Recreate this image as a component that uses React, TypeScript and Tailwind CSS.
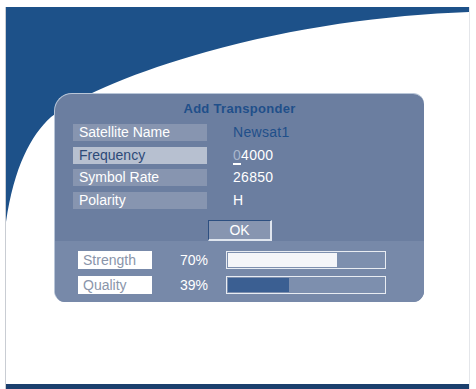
import React from "react";

const font = { fontFamily: '"Liberation Sans", Arial, sans-serif' };

function Row({ label, value, active, valueClass }: { label: string; value: React.ReactNode; active?: boolean; valueClass?: string }) {
  return (
    <div className="flex items-center h-[17px]">
      <div
        className={`w-[134px] h-[17px] flex items-center pl-[6px] text-[14px] ${
          active ? "bg-[#b7c0d0] text-[#2d4a78]" : "bg-[#8795b0] text-white"
        }`}
      >
        {label}
      </div>
      <div className={`ml-[26px] text-[14px] tracking-[0.3px] ${valueClass ?? "text-white"}`}>{value}</div>
    </div>
  );
}

function Meter({ label, pct, fillClass }: { label: string; pct: number; fillClass: string }) {
  return (
    <div className="flex items-center h-[18px]">
      <div className="w-[74px] h-[18px] bg-white text-[#8a95aa] text-[14px] flex items-center pl-[5px]">
        {label}
      </div>
      <div className="w-[74px] pl-[28px] text-white text-[14px]">{pct}%</div>
      <div className="w-[160px] h-[18px] border border-[#e8ecf2] bg-[#7d8fae] p-[1px]">
        <div className={`h-full ${fillClass}`} style={{ width: `${pct}%` }} />
      </div>
    </div>
  );
}

export default function App() {
  return (
    <div className="w-[476px] h-[389px] bg-white relative overflow-hidden" style={font}>
      <div className="absolute left-[5px] top-[7px] right-[6px] bottom-0 border-l border-[#c9cdd3] border-r border-r-[#e4e6ea] bg-white overflow-hidden">
        <svg className="absolute inset-0" width="465" height="382" viewBox="0 0 465 382">
          <path
            d="M0,0 H465 V5 C380,8 290,20 200,45 C130,65 80,85 45,110 C25,128 8,160 0,215 Z"
            fill="#1d5189"
          />
        </svg>
        <div className="absolute left-0 right-0 bottom-0 h-[5px] bg-[#1b3f6d]" />
      </div>

      <div className="relative pt-[93px] pl-[54px]">
        <div className="w-[370px] h-[209px] rounded-[11px] rounded-tl-[18px] bg-[#6b7ea0] border-t border-l border-[#b9c6d8] overflow-hidden flex flex-col">
          <div className="h-[126px] flex flex-col">
            <div className="h-[30px] flex items-center justify-center text-[#1f4f8a] text-[13px] tracking-[0.3px] font-bold">
              Add Transponder
            </div>
            <div className="flex flex-col gap-[5.5px] pl-[18px]">
              <Row label="Satellite Name" value="Newsat1" valueClass="text-[#1f4f8a]" />
              <Row
                label="Frequency"
                active
                value={
                  <span className="relative">
                    <span className="text-[#a9b6cc]">0</span>
                    <span className="absolute left-0 top-[16px] w-[8px] h-[2px] bg-white" />
                    4000
                  </span>
                }
              />
              <Row label="Symbol Rate" value="26850" />
              <Row label="Polarity" value="H" />
            </div>
          </div>
          <div className="flex pl-[153px] h-[21px]">
            <div className="w-[64px] h-[21px] bg-[#8795b0] border-t border-l border-[#2d4f80] border-r-2 border-b-2 border-r-[#dfe5ee] border-b-[#dfe5ee] text-white text-[14px] flex items-center justify-center">
              OK
            </div>
          </div>
          <div className="flex-1 bg-[#7789a9] flex flex-col gap-[7px] pl-[23px] pt-[10px]">
            <Meter label="Strength" pct={70} fillClass="bg-[#f4f5f8]" />
            <Meter label="Quality" pct={39} fillClass="bg-[#3b5f92]" />
          </div>
        </div>
      </div>
    </div>
  );
}
